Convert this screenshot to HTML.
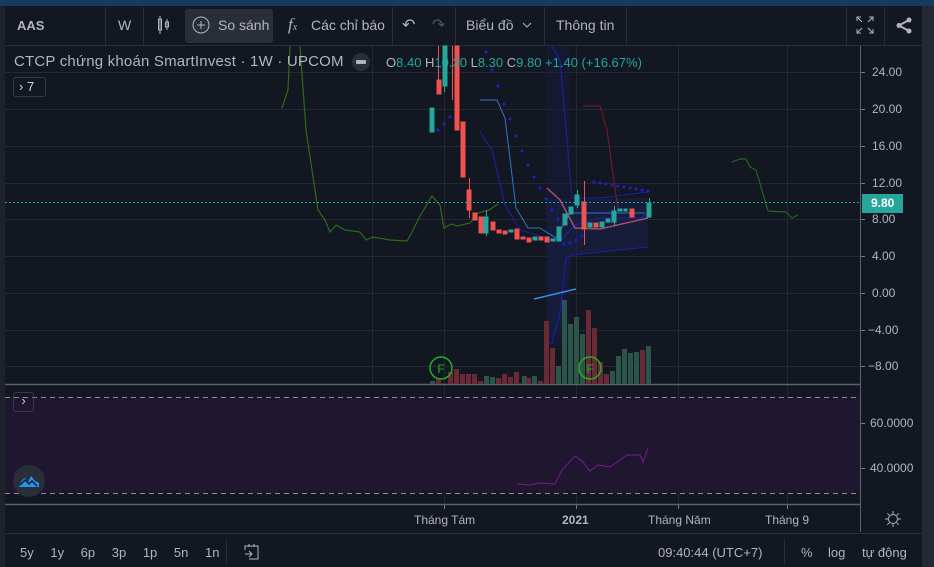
<!DOCTYPE html>
<html><head><meta charset="utf-8"><style>
*{margin:0;padding:0;box-sizing:border-box}
body{width:934px;height:567px;background:#131722;overflow:hidden;position:relative;font-family:"Liberation Sans","Noto Sans CJK SC",sans-serif;color:#b2b5be}
.a{position:absolute;white-space:nowrap}
.tb{font-size:14px;color:#b2b5be}
</style></head><body>
<div class="a" style="left:0;top:0;width:934px;height:6px;background:#173a5e"></div>
<div class="a" style="left:0;top:6px;width:5px;height:561px;background:#1e222d"></div>
<div class="a" style="left:922px;top:6px;width:12px;height:561px;background:#232834"></div>
<!-- toolbar -->
<div class="a" style="left:5px;top:45px;width:917px;height:1px;background:#2a2e39"></div>
<div class="a" style="left:105px;top:7px;width:1px;height:38px;background:#2a2e39"></div>
<div class="a" style="left:143px;top:7px;width:1px;height:38px;background:#2a2e39"></div>
<div class="a" style="left:392px;top:7px;width:1px;height:38px;background:#2a2e39"></div>
<div class="a" style="left:455px;top:7px;width:1px;height:38px;background:#2a2e39"></div>
<div class="a" style="left:544px;top:7px;width:1px;height:38px;background:#2a2e39"></div>
<div class="a" style="left:626px;top:7px;width:1px;height:38px;background:#2a2e39"></div>
<div class="a" style="left:846px;top:7px;width:1px;height:38px;background:#2a2e39"></div>
<div class="a" style="left:884px;top:7px;width:1px;height:38px;background:#2a2e39"></div>
<div class="a" style="left:185px;top:9px;width:88px;height:34px;background:#2a2e39;border-radius:3px"></div>
<div class="a tb" style="left:17px;top:18px;font-weight:bold;font-size:13px">AAS</div>
<div class="a tb" style="left:118px;top:17px">W</div>
<svg class="a" style="left:156px;top:15px" width="16" height="20"><path d="M4 1v18M2.5 4h3v11h-3zM11 4v11M9.5 7h3v5h-3z" stroke="#b2b5be" fill="none"/></svg>
<svg class="a" style="left:192px;top:16px" width="18" height="18"><circle cx="9" cy="9" r="8" stroke="#b2b5be" fill="none"/><path d="M9 5v8M5 9h8" stroke="#b2b5be"/></svg>
<div class="a tb" style="left:218px;top:17px">So sánh</div>
<div class="a tb" style="left:288px;top:15px;font-family:'Liberation Serif',serif;font-style:italic;font-size:17px">f<span style="font-size:10px">x</span></div>
<div class="a tb" style="left:311px;top:17px">Các chỉ báo</div>
<div class="a tb" style="left:402px;top:15px;font-size:16px">↶</div>
<div class="a tb" style="left:432px;top:15px;font-size:16px;color:#50535e">↷</div>
<div class="a tb" style="left:466px;top:17px">Biểu đồ</div>
<svg class="a" style="left:522px;top:22px" width="10" height="7"><path d="M1 1l4 4 4-4" stroke="#b2b5be" fill="none"/></svg>
<div class="a tb" style="left:556px;top:17px">Thông tin</div>
<svg class="a" style="left:856px;top:16px" width="18" height="18"><path d="M1 5V1h4M13 1h4v4M17 13v4h-4M5 17H1v-4M1 1l5 5M17 1l-5 5M17 17l-5-5M1 17l5-5" stroke="#b2b5be" fill="none"/></svg>
<svg class="a" style="left:896px;top:17px" width="16" height="17"><circle cx="13" cy="3" r="2.5" fill="#b2b5be"/><circle cx="3" cy="8.5" r="2.5" fill="#b2b5be"/><circle cx="13" cy="14" r="2.5" fill="#b2b5be"/><path d="M13 3L3 8.5 13 14" stroke="#b2b5be" stroke-width="2" fill="none"/></svg>

<!-- chart svg -->
<svg class="a" style="left:0;top:0" width="934" height="567">
<g stroke="#242835" stroke-width="1">
<path d="M5 72.5H860M5 109.5H860M5 146.5H860M5 183.5H860M5 219.5H860M5 256.5H860M5 293.5H860M5 330.5H860M5 366.5H860M5 423.5H860M5 468.5H860"/>
<path d="M444.5 46V504M576.5 46V504M678.5 46V504M787.5 46V504M372.5 46V384"/>
</g>
<rect x="5" y="397" width="855" height="96" fill="#1f1630"/>
<path d="M5 397.5H860M5 493.5H860" stroke="#8d8a95" stroke-dasharray="5 4"/>
<path d="M5 384.5H860M5 504.5H860" stroke="#5d606b" stroke-width="1.5"/>
<path d="M860.5 46V532" stroke="#5d606b"/>
<path d="M5 533.5H922" stroke="#2a2e39"/>
<g stroke="#787b86"><path d="M861 72.5h4M861 109.5h4M861 146.5h4M861 183.5h4M861 219.5h4M861 256.5h4M861 293.5h4M861 330.5h4M861 366.5h4M861 423.5h4M861 468.5h4M444.5 505v4M576.5 505v4M678.5 505v4M787.5 505v4"/></g>
<path d="M546 200L648 198V247L572 255L560 330L548 340Z" fill="#1a1f4a" opacity="0.6"/>
<rect x="546" y="46" width="24" height="300" fill="#161b3e" opacity="0.5"/>
<path d="M552 46L560 60 572 198 600 198 640 193 648 192" stroke="#1f1fb0" fill="none"/>
<path d="M480 132L492 150 505 205 520 230 540 236 555 240 562 239 575 225 600 218 640 218 648 214" stroke="#1f1fb0" fill="none"/>
<path d="M546 343L552 343 560 313 566 258 572 255 648 247" stroke="#1f1fb0" fill="none"/>
<path d="M480 100L497 100 505 118 516 208 528 228 540 228 556 238 570 213 620 213 645 213" stroke="#2a78c8" fill="none"/>
<path d="M534 299L576 289" stroke="#3a8ee0" stroke-width="1.5"/>
<path d="M583 106L600 106 607 130 618 210" stroke="#7a1c28" fill="none"/>
<path d="M547 188L560 200 575 228 600 229 648 218" stroke="#a05070" stroke-width="1.5" fill="none"/>
<g fill="#2020d0"><circle cx="438" cy="130" r="1.5"/><circle cx="444" cy="124" r="1.5"/><circle cx="450" cy="117" r="1.5"/><circle cx="486" cy="52" r="1.5"/><circle cx="492" cy="70" r="1.5"/><circle cx="498" cy="86" r="1.5"/><circle cx="504" cy="104" r="1.5"/><circle cx="510" cy="119" r="1.5"/><circle cx="516" cy="136" r="1.5"/><circle cx="522" cy="151" r="1.5"/><circle cx="528" cy="165" r="1.5"/><circle cx="534" cy="177" r="1.5"/><circle cx="540" cy="188" r="1.5"/><circle cx="546" cy="199" r="1.5"/><circle cx="552" cy="210" r="1.5"/><circle cx="558" cy="219" r="1.5"/><circle cx="564" cy="244" r="1.5"/><circle cx="570" cy="243" r="1.5"/><circle cx="576" cy="240" r="1.5"/><circle cx="582" cy="236" r="1.5"/><circle cx="594" cy="182" r="1.5"/><circle cx="600" cy="183" r="1.5"/><circle cx="606" cy="184" r="1.5"/><circle cx="612" cy="185" r="1.5"/><circle cx="618" cy="186" r="1.5"/><circle cx="624" cy="187" r="1.5"/><circle cx="630" cy="188" r="1.5"/><circle cx="636" cy="189" r="1.5"/><circle cx="642" cy="190" r="1.5"/><circle cx="648" cy="191" r="1.5"/></g>
<path d="M282 108L288 90 290 46M300 46L306 130 318 210 325 220 330 232 336 225 345 230 360 232 366 240 373 237 390 240 407 241 412 232 420 216 432 196 440 205 444 228 451 224 457 226 470 223 478 213 489 210 498 204" stroke="#2d6a1a" stroke-width="1.2" fill="none"/>
<path d="M732 162L740 159 746 159 750 167 756 170 768 211 786 212 792 218 798 215" stroke="#1a6a1a" stroke-width="1.2" fill="none"/>
<g fill="#2b5548">
<rect x="430" y="381" width="5" height="3"/><rect x="484" y="376" width="5" height="8"/><rect x="490" y="377" width="5" height="7"/><rect x="522" y="376" width="5" height="8"/><rect x="532" y="376" width="5" height="8"/><rect x="556" y="366" width="5" height="18"/><rect x="562" y="300" width="5" height="84"/><rect x="568" y="324" width="5" height="60"/><rect x="574" y="317" width="5" height="67"/><rect x="580" y="334" width="5" height="50"/><rect x="610" y="371" width="5" height="13"/><rect x="616" y="356" width="5" height="28"/><rect x="622" y="349" width="5" height="35"/><rect x="628" y="353" width="5" height="31"/><rect x="634" y="352" width="5" height="32"/><rect x="646" y="346" width="5" height="38"/></g>
<g fill="#6a2a35">
<rect x="436" y="379" width="5" height="5"/><rect x="448" y="372" width="5" height="12"/><rect x="454" y="369" width="5" height="15"/><rect x="460" y="374" width="5" height="10"/><rect x="466" y="374" width="5" height="10"/><rect x="472" y="374" width="5" height="10"/><rect x="478" y="381" width="5" height="3"/><rect x="496" y="378" width="5" height="6"/><rect x="502" y="374" width="5" height="10"/><rect x="508" y="377" width="5" height="7"/><rect x="514" y="372" width="5" height="12"/><rect x="526" y="378" width="5" height="6"/><rect x="538" y="381" width="5" height="3"/><rect x="544" y="321" width="5" height="63"/><rect x="550" y="348" width="5" height="36"/><rect x="586" y="310" width="5" height="74"/><rect x="592" y="328" width="5" height="56"/><rect x="598" y="362" width="5" height="22"/><rect x="604" y="374" width="5" height="10"/><rect x="640" y="350" width="5" height="34"/></g>
<circle cx="441" cy="368" r="11" stroke="#22b022" stroke-width="1.5" fill="none"/><text x="441" y="373" fill="#22b022" font-size="12" text-anchor="middle" font-family="Liberation Sans">F</text>
<circle cx="590" cy="368" r="11" stroke="#22b022" stroke-width="1.5" fill="none"/><text x="590" y="373" fill="#22b022" font-size="12" text-anchor="middle" font-family="Liberation Sans">F</text>
<g fill="#26a69a" stroke="#26a69a">
<rect x="430" y="108" width="4" height="24"/><path d="M444.5 46V92"/><rect x="443" y="46" width="4" height="40"/><rect x="484" y="217" width="4" height="16"/><rect x="509" y="230" width="4" height="2"/><rect x="533" y="237" width="4" height="3"/><rect x="551" y="239" width="4" height="2"/><rect x="557" y="227" width="4" height="14"/><rect x="563" y="214" width="4" height="11"/><rect x="569" y="207" width="4" height="7"/><rect x="575" y="195" width="4" height="10"/><rect x="588" y="223" width="4" height="4"/><rect x="600" y="222" width="4" height="5"/><rect x="606" y="219" width="4" height="3"/><rect x="612" y="211" width="4" height="11"/><rect x="618" y="209" width="4" height="2"/><rect x="624" y="209" width="3" height="2"/><rect x="647" y="203" width="4" height="14"/>
<path d="M486.5 210V236M577.5 190V208M649.5 198V218M614.5 206V226"/></g>
<g fill="#ef5350" stroke="#ef5350">
<rect x="437" y="80" width="4" height="14"/><path d="M438.5 46V94M452.5 46V100"/><rect x="455" y="46" width="4" height="84"/><rect x="461" y="122" width="4" height="55"/><rect x="467" y="190" width="4" height="20"/><path d="M469.5 178V218"/><rect x="473" y="213" width="4" height="7"/><rect x="479" y="217" width="4" height="16"/><rect x="491" y="222" width="4" height="8"/><rect x="497" y="230" width="4" height="3"/><rect x="503" y="231" width="4" height="3"/><rect x="515" y="229" width="4" height="10"/><rect x="521" y="237" width="4" height="2"/><rect x="527" y="238" width="4" height="4"/><rect x="539" y="237" width="4" height="3"/><rect x="545" y="237" width="4" height="5"/><rect x="582" y="202" width="4" height="27"/><path d="M584.5 181V245"/><rect x="594" y="223" width="4" height="4"/><rect x="630" y="209" width="4" height="8"/></g>
<path d="M5 202.5H860" stroke="#26a69a" stroke-dasharray="2 2"/>
<path d="M517 484L530 485 540 483 555 484 562 470 575 456 582 461 590 471 598 465 610 467 620 460 627 455 640 455 643 462 648 448" stroke="#6a1a80" stroke-width="1.2" fill="none"/>
</svg>

<div class="a" style="left:14px;top:53px;font-size:15px;color:#b2b5be;letter-spacing:0.2px">CTCP chứng khoán SmartInvest · 1W · UPCOM</div>
<div class="a" style="left:352px;top:53px;width:18px;height:18px;border-radius:9px;background:#2a2e39"><div style="margin:7px 4px;width:10px;height:4px;background:#b2b5be;border-radius:1px"></div></div>
<div class="a" style="left:386px;top:55px;font-size:13px;color:#26a69a"><span style="color:#b2b5be">O</span>8.40 <span style="color:#b2b5be">H</span>10.30 <span style="color:#b2b5be">L</span>8.30 <span style="color:#b2b5be">C</span>9.80 +1.40 (+16.67%)</div>
<div class="a" style="left:13px;top:77px;width:33px;height:20px;border:1px solid #363a45;border-radius:3px;font-size:13px;color:#d1d4dc;padding:1px 0 0 5px">›&nbsp;7</div>
<div class="a" style="left:13px;top:392px;width:21px;height:20px;border:1px solid #363a45;border-radius:3px;font-size:13px;color:#d1d4dc;text-align:center">›</div>
<div class="a" style="left:13px;top:465px;width:32px;height:32px;border-radius:16px;background:#2a2e39"></div>
<svg class="a" style="left:18px;top:474px" width="22" height="14"><path d="M1 13L4 6 7 4 10 8 13 2 17 7 21 9V13Z" fill="#2196f3"/><path d="M2 11l5-5 4 4 3-3 5 5" stroke="#131722" stroke-width="1.5" fill="none"/></svg>

<div class="a" style="left:872px;top:65px;font-size:12px">24.00</div>
<div class="a" style="left:872px;top:102px;font-size:12px">20.00</div>
<div class="a" style="left:872px;top:139px;font-size:12px">16.00</div>
<div class="a" style="left:872px;top:176px;font-size:12px">12.00</div>
<div class="a" style="left:872px;top:212px;font-size:12px">8.00</div>
<div class="a" style="left:872px;top:249px;font-size:12px">4.00</div>
<div class="a" style="left:872px;top:286px;font-size:12px">0.00</div>
<div class="a" style="left:868px;top:323px;font-size:12px">−4.00</div>
<div class="a" style="left:868px;top:359px;font-size:12px">−8.00</div>
<div class="a" style="left:862px;top:194px;width:41px;height:19px;background:#26a69a;color:#fff;font-size:12px;font-weight:bold;padding:2px 0 0 9px">9.80</div>
<div class="a" style="left:870px;top:416px;font-size:12px">60.0000</div>
<div class="a" style="left:870px;top:461px;font-size:12px">40.0000</div>

<div class="a" style="left:414px;top:513px;font-size:12px">Tháng Tám</div>
<div class="a" style="left:562px;top:513px;font-size:12px;font-weight:bold">2021</div>
<div class="a" style="left:648px;top:513px;font-size:12px">Tháng Năm</div>
<div class="a" style="left:765px;top:513px;font-size:12px">Tháng 9</div>
<svg class="a" style="left:884px;top:510px" width="18" height="18"><circle cx="9" cy="9" r="4.5" stroke="#b2b5be" fill="none"/><path d="M9 1v3M9 14v3M1 9h3M14 9h3M3.3 3.3l2 2M12.7 12.7l2 2M3.3 14.7l2-2M12.7 5.3l2-2" stroke="#b2b5be"/></svg>

<div class="a" style="left:20px;top:545px;font-size:13px;word-spacing:13px">5y 1y 6p 3p 1p 5n 1n</div>
<div class="a" style="left:226px;top:540px;width:1px;height:24px;background:#2a2e39"></div>
<svg class="a" style="left:242px;top:543px" width="18" height="18"><path d="M3 7V3h13v13H7M3 11h7M7 8l3 3-3 3M7 1v3M12 1v3" stroke="#b2b5be" fill="none"/></svg>
<div class="a" style="left:658px;top:545px;font-size:13px">09:40:44 (UTC+7)</div>
<div class="a" style="left:784px;top:540px;width:1px;height:24px;background:#2a2e39"></div>
<div class="a" style="left:801px;top:545px;font-size:13px">%</div>
<div class="a" style="left:828px;top:545px;font-size:13px">log</div>
<div class="a" style="left:862px;top:545px;font-size:13px">tự động</div>
</body></html>
